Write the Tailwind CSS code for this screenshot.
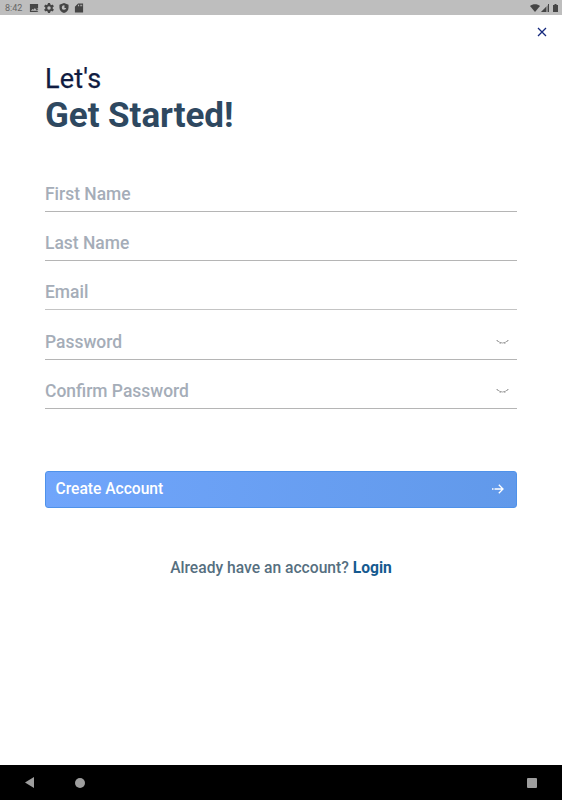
<!DOCTYPE html>
<html lang="en">
<head>
    <meta charset="UTF-8">
    <meta name="viewport" content="width=device-width, initial-scale=1.0">
    <title>Create Account</title>
    <script src="https://cdn.jsdelivr.net/npm/@tailwindcss/browser@4"></script>
</head>
<body class="bg-white h-screen flex flex-col overflow-hidden font-[Roboto,sans-serif]">
    <!-- Status bar -->
    <div class="h-[15px] shrink-0 bg-[#bebebe] flex items-center justify-between pl-[5px] pr-[4px] text-[#454545]">
        <div class="flex items-center">
            <span class="text-[9px] leading-[15px] pt-px w-[24px] text-[#666]">8:42</span>
            <svg class="w-[10px] h-[10px]" viewBox="1 1 22 22" fill="currentColor"><path fill-rule="evenodd" d="M3 3h18v18H3zM5 18h13l-4-6-3 4-2-2zM18 13h3v2h-3zM18 17h3v2h-3z"/></svg>
            <svg class="w-[10px] h-[10px] ml-[5px]" viewBox="2 2 20 20" fill="none" stroke="currentColor"><circle cx="12" cy="12" r="5.500" stroke-width="4"/><path stroke-width="4.500" d="M12 2v4M12 18v4M3.300 7l3.500 2M17.200 15l3.500 2M3.300 17l3.500-2M17.200 9l3.500-2"/></svg>
            <svg class="w-[10px] h-[10px] ml-[5px]" viewBox="1 1 22 22" fill="currentColor"><path fill-rule="evenodd" d="M12 1 2 5v6c0 6 4 10.500 10 12 6-1.500 10-6 10-12V5zM12 6a5 5 0 1 0 5 6h-4v-5.900z"/></svg>
            <svg class="w-[10px] h-[10px] ml-[5px]" viewBox="1 1 22 22" fill="currentColor"><path fill-rule="evenodd" d="M21 2H10L3 9v13h18zM10 5v3h2V5zM14 5v3h1.500V5zM17 5v3h2V5z"/></svg>
        </div>
        <div class="flex items-center">
            <svg class="w-[10px] h-[8px]" viewBox="0 0 20 16" fill="currentColor"><path d="M10 16 0 4C5-1 15-1 20 4z"/></svg>
            <svg class="w-[8px] h-[8px] ml-[1px]" viewBox="0 0 16 16"><path fill="#888" d="M0 16 16 0v16z"/><path fill="currentColor" d="M0 16 10 6v10zM14 0h2v16h-2z"/></svg>
            <svg class="w-[5px] h-[8px] ml-[4px]" viewBox="0 0 10 16" fill="currentColor"><path d="M0 2h3V0h4v2h3v14H0z"/></svg>
        </div>
    </div>

    <!-- Close -->
    <div class="h-[35px] shrink-0 flex items-center justify-end pr-[15px] pb-px">
        <button aria-label="Close">
            <svg class="w-[10px] h-[10px] text-[#14287d]" viewBox="0 0 10 10" fill="none" stroke="currentColor" stroke-width="1.300"><path d="m1 1 8 8M9 1 1 9"/></svg>
        </button>
    </div>

    <main class="flex-1 px-[45px] pt-[12px]">
        <h1>
            <span class="block text-[27px] leading-[35px] tracking-[.2px] text-[#101c42] [-webkit-text-stroke:.25px_#101c42]">Let's</span>
            <span class="block text-[35px] leading-[37px] tracking-[-.05px] font-bold text-[#2e4860]">Get Started!</span>
        </h1>

        <form class="mt-[28.600px] text-[17.450px] font-medium text-[#a5adb8]">
            <div class="h-[49.300px] flex items-end border-b border-[#b5b5b5] pb-[5.300px]">
                <label class="leading-[24px]">First Name</label>
            </div>
            <div class="h-[49.300px] flex items-end border-b border-[#b5b5b5] pb-[5.300px]">
                <label class="leading-[24px]">Last Name</label>
            </div>
            <div class="h-[49.300px] flex items-end border-b border-[#c4c4c4] pb-[5.800px]">
                <label class="leading-[24px]">Email</label>
            </div>
            <div class="h-[49.300px] flex items-end justify-between border-b border-[#b5b5b5] pb-[5px] pr-[8px]">
                <label class="leading-[24px]">Password</label>
                <svg class="w-[13px] h-[6px] mb-[9px] text-[#999]" viewBox="0 0 13 6" fill="none" stroke="currentColor" stroke-width=".9"><path d="M1 1.500q5.500 5 11 0M2 2 .5 1.500M4.500 3.500 4 5M8.500 3.500 9 5M11 2l1.500-.5"/></svg>
            </div>
            <div class="h-[49.300px] flex items-end justify-between border-b border-[#b5b5b5] pb-[5.500px] pr-[8px]">
                <label class="leading-[24px]">Confirm Password</label>
                <svg class="w-[13px] h-[6px] mb-[9px] text-[#999]" viewBox="0 0 13 6" fill="none" stroke="currentColor" stroke-width=".9"><path d="M1 1.500q5.500 5 11 0M2 2 .5 1.500M4.500 3.500 4 5M8.500 3.500 9 5M11 2l1.500-.5"/></svg>
            </div>

            <button type="button" class="mt-[62px] w-full h-[37px] flex items-center justify-between pl-[9.500px] pr-[12px] rounded-[3px] border border-[#4f92ea] bg-linear-to-r from-[#70a5fb] to-[#6199ea] text-[15.600px] text-white">
                <span class="pt-px">Create Account</span>
                <svg class="w-[12px] h-[10px] mb-px" viewBox="0 0 12 10" fill="none" stroke="currentColor" stroke-width="1.300"><path d="M0 5h1.500M2.500 5H11M6.800.8 11 5 6.800 9.200"/></svg>
            </button>
        </form>

        <p class="mt-[48px] text-center text-[15.650px] leading-[24px] font-medium text-[#566f80]">Already have an account? <a class="font-bold text-[#155a90]">Login</a></p>
    </main>

    <!-- Navigation bar -->
    <nav class="h-[35px] shrink-0 bg-black flex items-center pl-[25px] pr-[25px] text-[#9e9e9e]">
        <svg class="w-[9px] h-[11px]" viewBox="0 0 9 11" fill="currentColor"><path d="M9 0v11L0 5.500z"/></svg>
        <span class="ml-[41px] size-[10px] rounded-full bg-[#9e9e9e]"></span>
        <span class="ml-auto size-[10px] rounded-[1px] bg-[#9e9e9e]"></span>
    </nav>
</body>
</html>
